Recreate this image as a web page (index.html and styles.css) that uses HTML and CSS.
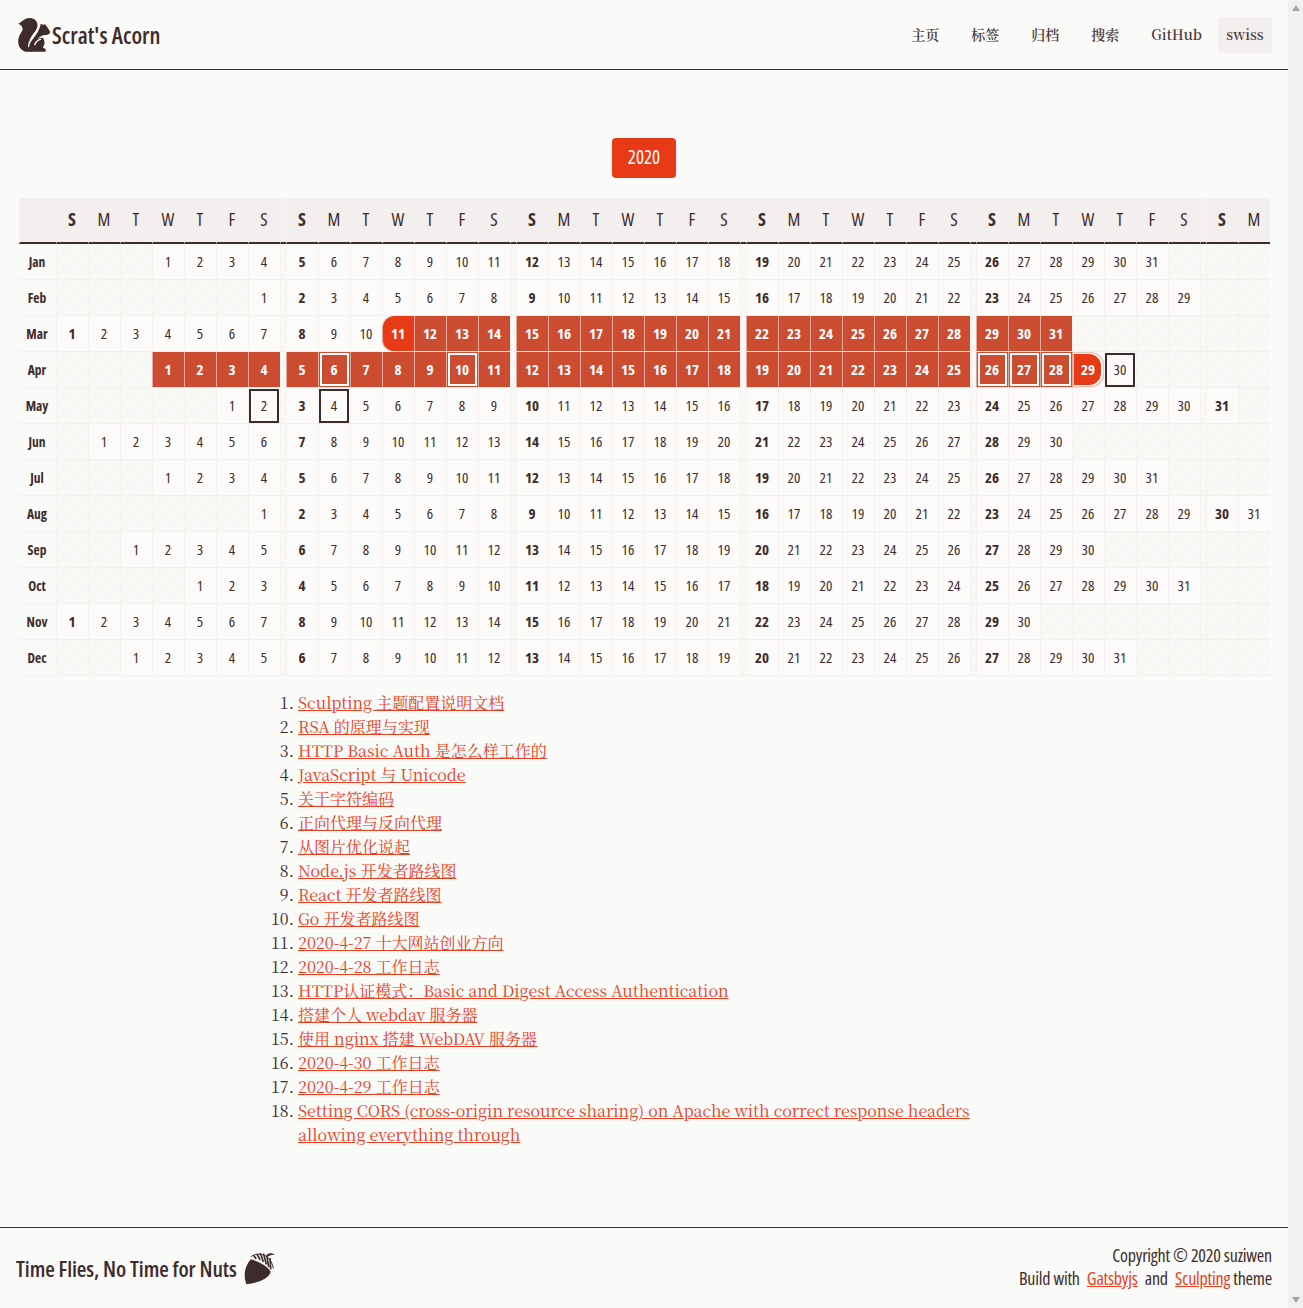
FILE: index.html
```html
<!DOCTYPE html>
<html lang="en">
<head>
    <meta charset="UTF-8">
    <meta name="viewport" content="width=device-width, initial-scale=1.0">
    <title>Scrat's Acorn</title>
    <link rel="stylesheet" href="styles.css">
</head>

<body>
    <div class="page">
        <header class="site-header">
            <a class="logo" href="#">
                <svg class="logo-icon" viewBox="52 46 100 104" aria-hidden="true">
                    <path d="M54 66C62 66 70 50 88 49C104 48 114 60 112 74C110 84 106 90 100 96C94 104 90 114 90 128L94 149L76 149C60 144 52 128 56 110C58 98 66 92 68 84C69 74 62 68 54 66Z"/>
                    <path d="M120 75L122 66L130 70L133 67C142 74 146 84 150 90L148 96C142 100 136 100 130 100C124 102 118 104 112 112L120 108L128 108C134 116 136 128 128 136L137 142L136 149L92 149L89 128C92 120 98 112 106 102C112 94 116 86 120 75Z"/>
                    <path class="logo-cut" d="M114 78C110 90 98 100 92 112C88 120 86 126 86 134"/>
                    <path class="logo-cut" d="M104 128C108 120 114 114 122 112"/>
                </svg>
                <span class="logo-text">Scrat's Acorn</span>
            </a>
            <nav class="nav">
                <a href="#">主页</a>
                <a href="#">标签</a>
                <a href="#">归档</a>
                <a href="#">搜索</a>
                <a class="nav-github" href="#">GitHub</a>
                <a class="nav-theme" href="#">swiss</a>
            </nav>
        </header>

        <main class="content">
            <div class="year-row">
                <button class="year-btn" type="button">2020</button>
            </div>

            <table class="calendar" id="calendar"></table>

            <ol class="posts">
                <li><a href="#">Sculpting 主题配置说明文档</a></li>
                <li><a href="#">RSA 的原理与实现</a></li>
                <li><a href="#">HTTP Basic Auth 是怎么样工作的</a></li>
                <li><a href="#">JavaScript 与 Unicode</a></li>
                <li><a href="#">关于字符编码</a></li>
                <li><a href="#">正向代理与反向代理</a></li>
                <li><a href="#">从图片优化说起</a></li>
                <li><a href="#">Node.js 开发者路线图</a></li>
                <li><a href="#">React 开发者路线图</a></li>
                <li><a href="#">Go 开发者路线图</a></li>
                <li><a href="#">2020-4-27 十大网站创业方向</a></li>
                <li><a href="#">2020-4-28 工作日志</a></li>
                <li><a href="#">HTTP认证模式：Basic and Digest Access Authentication</a></li>
                <li><a href="#">搭建个人 webdav 服务器</a></li>
                <li><a href="#">使用 nginx 搭建 WebDAV 服务器</a></li>
                <li><a href="#">2020-4-30 工作日志</a></li>
                <li><a href="#">2020-4-29 工作日志</a></li>
                <li><a href="#">Setting CORS (cross-origin resource sharing) on Apache with correct response headers allowing everything through</a></li>
            </ol>
        </main>

        <footer class="site-footer">
            <div class="slogan">
                <span class="slogan-text">Time Flies, No Time for Nuts</span>
                <svg class="acorn" viewBox="728 88 100 104" aria-hidden="true">
                    <path d="M752 112C772 118 800 130 812 150C806 170 780 182 738 188C730 165 730 135 752 112Z"/>
                    <path class="cap" d="M760 100L768 111M770 96L780 114M780 94L790 120M790 95L799 128M800 100L806 136M810 108L812 143"/>
                    <path class="cap-edge" d="M752 104C775 88 812 96 820 140"/>
                    <path d="M798 100C806 92 816 92 825 98C816 98 808 100 804 104Z"/>
                </svg>
            </div>
            <div class="credits">
                <p>Copyright © 2020 suziwen</p>
                <p>Build with <a class="gatsby" href="#">Gatsbyjs</a> and <a class="theme-link" href="#">Sculpting</a> theme</p>
            </div>
        </footer>
    </div>

    <div class="scrollbar">
        <span class="arrow-up"></span>
        <span class="arrow-down"></span>
    </div>

    <script src="script.js"></script>
</body>

</html>
```

FILE: styles.css
```css
* {
    box-sizing: border-box;
}
html, body {
    height: 100%;
    margin: 0;
}
body {
    display: flex;
    overflow: hidden;
    background-color: #fafaf8;
    color: #3e2b2b;
    font-family: "Noto Serif CJK SC", "Liberation Serif", "Noto Sans CJK SC", serif;
    font-size: 16px;
    line-height: 24px;
}
a {
    color: #e8401f;
}
p {
    margin: 0;
}

.page {
    flex: 1;
    display: flex;
    flex-direction: column;
    min-width: 0;
}

/* header */
.site-header {
    height: 70px;
    flex-shrink: 0;
    display: flex;
    align-items: center;
    justify-content: space-between;
    padding: 0 16px 0 17px;
    border-bottom: 1px solid #3e2b2b;
}
.logo {
    display: flex;
    align-items: center;
    gap: 1px;
    color: #3e2b2b;
    text-decoration: none;
}
.logo-icon {
    width: 34px;
    height: 35px;
    fill: #3e2b2b;
}
.logo-cut {
    fill: none;
    stroke: #fafaf8;
    stroke-width: 4;
    stroke-linecap: round;
}
.logo-text {
    font-family: "Open Sans", sans-serif;
    font-stretch: 75%;
    font-size: 23px;
    font-weight: 600;
}
.nav {
    display: flex;
    align-items: center;
    gap: 16px;
    font-size: 14px;
    font-weight: 600;
}
.nav a {
    padding: 5px 8px 7px;
    color: #4a3a3a;
    text-decoration: none;
}
.nav .nav-github {
    margin-right: -8px;
}
.nav .nav-theme {
    width: 54px;
    background-color: #f4efef;
    border-radius: 2px;
    text-align: center;
}

/* calendar */
.content {
    flex: 1;
}
.year-row {
    display: flex;
    justify-content: center;
    padding: 68px 0 20px;
}
.year-btn {
    width: 64px;
    height: 40px;
    padding: 0 0 2px;
    border: none;
    border-radius: 4px;
    background-color: #e83a16;
    color: #fff;
    font-family: "Open Sans", sans-serif;
    font-stretch: 75%;
    font-size: 19px;
}
.calendar {
    width: 1251px;
    margin: 0 auto;
    border-collapse: separate;
    border-spacing: 0;
    table-layout: fixed;
    font-family: "Open Sans", sans-serif;
    font-stretch: 75%;
    font-size: 15px;
    line-height: 16px;
}
.calendar col.label {
    width: 37px;
}
.calendar col.day {
    width: 32px;
}
.calendar col.gap {
    width: 6px;
}
.calendar th {
    height: 46px;
    padding: 0 0 2px;
    border-left: 1px solid #f6f2f1;
    border-bottom: 2px solid #3e2b2b;
    background-color: #f4efef;
    font-size: 18px;
    font-weight: normal;
}
.calendar td {
    height: 36px;
    padding: 0 0 2px;
    border-left: 1px solid #f5f2f0;
    border-bottom: 1px solid #f2efed;
    background-color: #fcfbfa;
    text-align: center;
}
.calendar th.sun,
.calendar td.sun,
.calendar td.month,
.calendar td.range {
    font-weight: bold;
}
.calendar td.month {
    padding: 0;
    border-left: none;
    background-color: transparent;
    font-size: 13.5px;
}
.calendar td.blank {
    background-color: transparent;
    background-image: repeating-linear-gradient(135deg, #f5f3f0, #f5f3f0 1px, transparent 1px, transparent 3px);
}
.calendar td.range {
    border-left-color: #e6a898;
    border-bottom-color: #f8e6e0;
    background-color: #cc4c32;
    color: #fff;
}
.calendar td.ring {
    box-shadow: inset 0 0 0 1px #cc4c32, inset 0 0 0 3px #fff;
}
.calendar td.start {
    border-radius: 12px 0 0 12px;
    background-color: #e83a16;
}
.calendar td.end {
    border-radius: 0 14px 14px 0;
    background-color: #e83a16;
    box-shadow: inset 0 0 0 1px #f6c0b0, inset -1px 0 0 2px #fff;
}
.calendar td.today {
    outline: 2px solid #3e2b2b;
    outline-offset: -3px;
}

/* posts */
.posts {
    width: 772px;
    margin: 15px 0 0 258px;
    padding: 0 0 0 40px;
}

/* footer */
.site-footer {
    height: 81px;
    flex-shrink: 0;
    display: flex;
    align-items: center;
    justify-content: space-between;
    padding: 0 16px;
    border-top: 1px solid #3e2b2b;
}
.slogan {
    display: flex;
    align-items: center;
    gap: 6px;
}
.slogan-text {
    font-family: "Open Sans", sans-serif;
    font-stretch: 75%;
    font-size: 22px;
    font-weight: 600;
    letter-spacing: -0.1px;
}
.acorn {
    width: 33px;
    height: 35px;
    fill: #3e2b2b;
}
.acorn .cap {
    fill: none;
    stroke: #3e2b2b;
    stroke-width: 5;
}
.acorn .cap-edge {
    fill: none;
    stroke: #3e2b2b;
    stroke-width: 3;
}
.credits {
    padding-bottom: 2px;
    font-family: "Open Sans", sans-serif;
    font-stretch: 75%;
    font-size: 18px;
    letter-spacing: -0.2px;
    line-height: 23px;
    text-align: right;
}
.credits .gatsby {
    margin: 0 4px;
}
.credits .theme-link {
    margin-left: 4px;
}

/* scrollbar */
.scrollbar {
    width: 15px;
    flex-shrink: 0;
    display: flex;
    flex-direction: column;
    justify-content: space-between;
    align-items: center;
    padding: 5px 0;
    background-color: #f1f1f1;
}
.arrow-up {
    border: 4px solid transparent;
    border-top: none;
    border-bottom: 6px solid #a3a3a3;
}
.arrow-down {
    border: 4px solid transparent;
    border-bottom: none;
    border-top: 6px solid #a3a3a3;
}
```

FILE: script.js
```js
// build the 2020 year calendar, one column per weekday, weeks split by a gap column
const MONTHS = ['Jan', 'Feb', 'Mar', 'Apr', 'May', 'Jun', 'Jul', 'Aug', 'Sep', 'Oct', 'Nov', 'Dec'];
const LETTERS = ['S', 'M', 'T', 'W', 'T', 'F', 'S'];
const DAY_COLS = 37;
const YEAR = 2020;

const calendar = document.getElementById('calendar');

function isGapAfter(col) {
    return col % 7 === 6 && col < DAY_COLS - 1;
}

function inRange(month, day) {
    const n = month * 100 + day;
    return n >= 211 && n <= 329;
}

function dayClass(month, day, col) {
    const names = [];
    if (col % 7 === 0) names.push('sun');
    if (inRange(month, day)) names.push('range');
    if (month === 2 && day === 11) names.push('start');
    if (month === 3 && day === 29) names.push('end');
    if (month === 3 && [6, 10, 26, 27, 28].includes(day)) names.push('ring');
    if ((month === 3 && day === 30) || (month === 4 && (day === 2 || day === 4))) names.push('today');
    return names.join(' ');
}

function buildCols() {
    let html = '<colgroup><col class="label">';
    for (let col = 0; col < DAY_COLS; col++) {
        html += '<col class="day">';
        if (isGapAfter(col)) html += '<col class="gap">';
    }
    return html + '</colgroup>';
}

function buildHead() {
    let html = '<thead><tr><th></th>';
    for (let col = 0; col < DAY_COLS; col++) {
        html += '<th' + (col % 7 === 0 ? ' class="sun"' : '') + '>' + LETTERS[col % 7] + '</th>';
        if (isGapAfter(col)) html += '<th></th>';
    }
    return html + '</tr></thead>';
}

function buildMonth(month) {
    const first = new Date(YEAR, month, 1).getDay();
    const length = new Date(YEAR, month + 1, 0).getDate();
    let html = '<tr><td class="month">' + MONTHS[month] + '</td>';
    for (let col = 0; col < DAY_COLS; col++) {
        const day = col - first + 1;
        if (day >= 1 && day <= length) {
            html += '<td class="' + dayClass(month, day, col) + '">' + day + '</td>';
        } else {
            html += '<td class="blank"></td>';
        }
        if (isGapAfter(col)) html += '<td class="blank"></td>';
    }
    return html + '</tr>';
}

calendar.innerHTML = buildCols() + buildHead() + '<tbody>' + MONTHS.map((m, i) => buildMonth(i)).join('') + '</tbody>';
```
